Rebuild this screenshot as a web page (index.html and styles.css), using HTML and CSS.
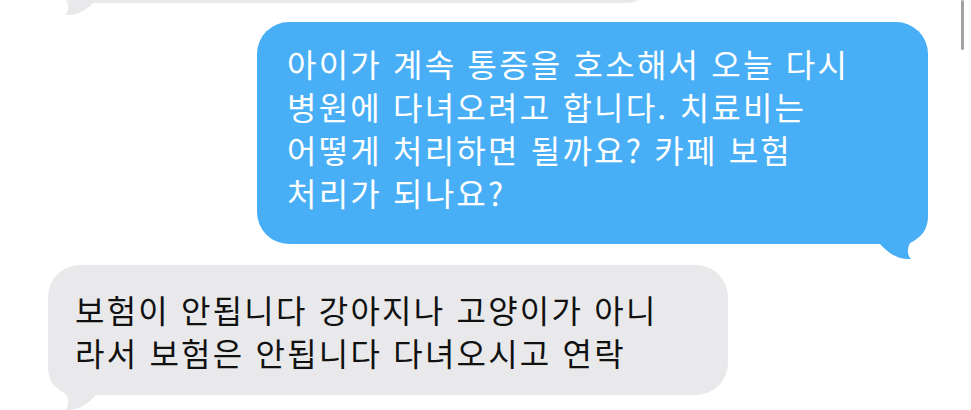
FILE: index.html
```html
<!DOCTYPE html>
<html lang="ko">
<head>
<meta charset="utf-8">
<link rel="stylesheet" href="styles.css">
</head>
<body>
<div class="thread">
  <div class="msg recv prev">
    <div class="bubble">
      <svg class="tail" width="55" height="65" viewBox="0 0 55 65"><path d="M2 5 L2 20 C2 33 8 41 20 47 C23 53 23 59 19 63 C32 64 42 57 50 48 L50 5 Z"/></svg>
    </div>
  </div>
  <div class="msg sent">
    <div class="bubble">
      <svg class="tail" width="55" height="65" viewBox="0 0 55 65"><path d="M53 5 L53 20 C53 33 47 41 35 47 C32 53 32 59 36 63 C23 64 13 57 5 48 L5 5 Z"/></svg>
      <p class="text">아이가 계속 통증을 호소해서 오늘 다시<br>병원에 다녀오려고 합니다. 치료비는<br>어떻게 처리하면 될까요? 카페 보험<br>처리가 되나요?</p>
    </div>
  </div>
  <div class="msg recv">
    <div class="bubble">
      <svg class="tail" width="55" height="65" viewBox="0 0 55 65"><path d="M2 5 L2 20 C2 33 8 41 20 47 C23 53 23 59 19 63 C32 64 42 57 50 48 L50 5 Z"/></svg>
      <p class="text">보험이 안됩니다 강아지나 고양이가 아니<br>라서 보험은 안됩니다 다녀오시고 연락</p>
    </div>
  </div>
</div>
<div class="scroll-indicator"></div>
</body>
</html>
```
FILE: styles.css
```css
* { box-sizing: border-box; }
html, body {
  margin: 0;
  padding: 0;
  background: #ffffff;
  width: 971px;
  height: 410px;
  overflow: hidden;
}
body {
  font-family: "Noto Sans CJK KR", "Noto Sans", sans-serif;
  font-size: 32px;
  line-height: 43px;
  letter-spacing: 2.2px;
  position: relative;
}
.thread {
  display: flex;
  flex-direction: column;
}
.msg {
  display: flex;
}
.bubble {
  position: relative;
  border-radius: 32px;
  white-space: nowrap;
}
.text {
  margin: 0;
  position: relative;
  z-index: 1;
}
.tail {
  position: absolute;
  bottom: -17px;
  z-index: 0;
}
.recv .bubble {
  background: #e9e9eb;
  color: #111111;
  margin-left: 48px;
  width: 680px;
  padding: 23px 27px 21px;
}
.recv .tail { left: -2px; fill: #e9e9eb; }
.prev .bubble {
  width: 608px;
  height: 60px;
  margin-top: -57px;
}
.prev .tail { bottom: -14px; }
.sent {
  justify-content: flex-end;
  margin-top: 19px;
  margin-bottom: 21px;
}
.sent .bubble {
  background: #48aff6;
  color: #ffffff;
  margin-right: 43px;
  width: 671px;
  padding: 20px 30px 30px;
}
.sent .tail { right: -2px; fill: #48aff6; }
.scroll-indicator {
  position: absolute;
  left: 961px;
  top: 0;
  width: 3px;
  height: 50px;
  background: #a3a3a3;
  border-radius: 2px;
}
```
